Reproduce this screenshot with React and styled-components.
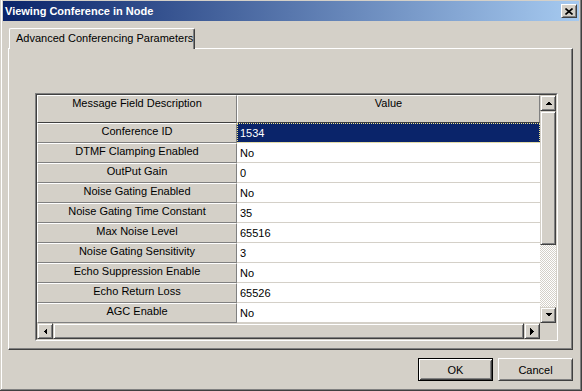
import React from 'react';
import styled, { createGlobalStyle } from 'styled-components';

const GlobalStyle = createGlobalStyle`
  html, body {
    margin: 0;
    padding: 0;
    background: #d4d0c8;
  }
  body {
    font-family: "Liberation Sans", Arial, sans-serif;
    font-size: 11px;
    color: #000;
  }
`;

// 3d bevels used all over the classic look
const raised = `
  border: 1px solid;
  border-color: #fff #404040 #404040 #fff;
  box-shadow: inset 1px 1px #d4d0c8, inset -1px -1px #808080;
`;

const scrollRaised = `
  border: 1px solid;
  border-color: #d4d0c8 #404040 #404040 #d4d0c8;
  box-shadow: inset 1px 1px #fff, inset -1px -1px #808080;
`;

const Window = styled.div`
  width: 582px;
  height: 391px;
  box-sizing: border-box;
  padding: 1px 3px 3px 3px;
  background: #d4d0c8;
  display: flex;
  flex-direction: column;
  box-shadow: inset -1px -1px #404040, inset 1px 0 #d4d0c8, inset -2px -2px #808080, inset 2px 0 #fff;
`;

const TitleBar = styled.div`
  height: 20px;
  flex: none;
  display: flex;
  align-items: center;
  justify-content: space-between;
  padding: 0 2px;
  background: linear-gradient(to right, #0a246a, #a6caf0);
  color: #fff;
  font-weight: bold;
  font-size: 11px;
`;

const CloseButton = styled.div`
  width: 16px;
  height: 14px;
  box-sizing: border-box;
  background: #d4d0c8;
  display: flex;
  align-items: center;
  justify-content: center;
  ${raised}
`;

const Body = styled.div`
  flex: 1;
  display: flex;
  flex-direction: column;
  padding: 7px 6px 0 5px;
`;

const TabStrip = styled.div`
  display: flex;
  padding-left: 1px;
`;

const Tab = styled.div`
  position: relative;
  z-index: 1;
  width: 186px;
  height: 21px;
  margin-bottom: -1px;
  box-sizing: border-box;
  padding: 3px 0 0 6px;
  background: #d4d0c8;
  border-top: 1px solid #fff;
  border-left: 1px solid #fff;
  border-right: 1px solid #404040;
  border-top-left-radius: 2px;
  border-top-right-radius: 2px;
  box-shadow: inset -1px 0 #808080;
  white-space: nowrap;
`;

const Panel = styled.div`
  height: 302px;
  box-sizing: border-box;
  padding: 44px 0 0 26px;
  border-top: 1px solid #fff;
  border-left: 1px solid #fff;
  border-right: 1px solid #404040;
  border-bottom: 1px solid #404040;
  box-shadow: inset -1px -1px #808080;
`;

const GridFrame = styled.div`
  width: 523px;
  height: 248px;
  box-sizing: border-box;
  border: 1px solid;
  border-color: #808080 #fff #fff #808080;
`;

const GridInner = styled.div`
  height: 100%;
  box-sizing: border-box;
  border: 1px solid;
  border-color: #404040 #d4d0c8 #d4d0c8 #404040;
  display: grid;
  grid-template-columns: 503px 16px;
  grid-template-rows: 228px 16px;
  background: #d4d0c8;
`;

const Table = styled.div`
  display: grid;
  grid-template-columns: 200px 303px;
  grid-template-rows: 28px;
  grid-auto-rows: 20px;
  background: #fff;
  overflow: hidden;
`;

const HeadCell = styled.div`
  background: #d4d0c8;
  box-sizing: border-box;
  border-top: 1px solid #fff;
  border-left: 1px solid #fff;
  border-right: 1px solid #808080;
  border-bottom: 1px solid #404040;
  text-align: center;
  padding-top: 1px;
  line-height: 13px;
`;

const LabelCell = styled.div`
  background: #d4d0c8;
  box-sizing: border-box;
  border-top: 1px solid #fff;
  border-left: 1px solid #fff;
  border-right: 1px solid #808080;
  border-bottom: 1px solid #808080;
  text-align: center;
  line-height: 14px;
  padding-top: 0px;
  white-space: nowrap;
`;

const ValueCell = styled.div`
  box-sizing: border-box;
  border-bottom: 1px solid #d4d0c8;
  padding: 3px 0 0 3px;
  line-height: 14px;
  background: ${p => (p.$selected ? '#0a246a' : '#fff')};
  color: ${p => (p.$selected ? '#fff' : '#000')};
  outline: ${p => (p.$selected ? '1px dotted #f0e68c' : 'none')};
  outline-offset: -1px;
`;

const VScroll = styled.div`
  display: flex;
  flex-direction: column;
`;

const HScroll = styled.div`
  display: flex;
`;

const ArrowButton = styled.div`
  width: 16px;
  height: 16px;
  flex: none;
  box-sizing: border-box;
  background: #d4d0c8;
  display: flex;
  align-items: center;
  justify-content: center;
  ${scrollRaised}
`;

const Thumb = styled.div`
  flex: ${p => (p.$size ? 'none' : '1')};
  height: ${p => (p.$size ? `${p.$size}px` : 'auto')};
  box-sizing: border-box;
  background: #d4d0c8;
  ${scrollRaised}
`;

const Track = styled.div`
  flex: 1;
  background-color: #fff;
  background-image: conic-gradient(#d4d0c8 25%, #fff 0 50%, #d4d0c8 0 75%, #fff 0);
  background-size: 2px 2px;
`;

const Corner = styled.div`
  background: #d4d0c8;
`;

const ButtonRow = styled.div`
  display: flex;
  justify-content: flex-end;
  gap: 5px;
  margin-top: 8px;
`;

const Button = styled.div`
  width: 75px;
  height: 23px;
  box-sizing: border-box;
  display: flex;
  align-items: center;
  justify-content: center;
  background: #d4d0c8;
  ${p =>
    p.$default
      ? `
    border: 1px solid #000;
    box-shadow: inset 1px 1px #fff, inset -1px -1px #404040, inset 2px 2px #d4d0c8, inset -2px -2px #808080;
  `
      : raised}
`;

const Arrow = ({ dir }) => {
  const pts = {
    up: '0,4 7,4 3.5,0.5',
    down: '0,0 7,0 3.5,3.5',
    left: '4,0 4,7 0.5,3.5',
    right: '0,0 0,7 3.5,3.5',
  }[dir];
  const vertical = dir === 'up' || dir === 'down';
  return (
    <svg width={vertical ? 7 : 4} height={vertical ? 4 : 7} viewBox={vertical ? '0 0 7 4' : '0 0 4 7'}>
      <polygon points={pts} fill="#000" shapeRendering="crispEdges" />
    </svg>
  );
};

const CloseGlyph = () => (
  <svg width="8" height="7" viewBox="0 0 8 7">
    <path d="M0.5 0.5 L7.5 6.5 M7.5 0.5 L0.5 6.5" stroke="#000" strokeWidth="1.6" fill="none" />
  </svg>
);

const rows = [
  ['Conference ID', '1534'],
  ['DTMF Clamping Enabled', 'No'],
  ['OutPut Gain', '0'],
  ['Noise Gating Enabled', 'No'],
  ['Noise Gating Time Constant', '35'],
  ['Max Noise Level', '65516'],
  ['Noise Gating Sensitivity', '3'],
  ['Echo Suppression Enable', 'No'],
  ['Echo Return Loss', '65526'],
  ['AGC Enable', 'No'],
];

export default function App() {
  return (
    <>
      <GlobalStyle />
      <Window>
        <TitleBar>
          <span>Viewing Conference in Node</span>
          <CloseButton><CloseGlyph /></CloseButton>
        </TitleBar>
        <Body>
          <TabStrip>
            <Tab>Advanced Conferencing Parameters</Tab>
          </TabStrip>
          <Panel>
            <GridFrame>
              <GridInner>
                <Table>
                  <HeadCell>Message Field Description</HeadCell>
                  <HeadCell>Value</HeadCell>
                  {rows.map(([label, value], i) => (
                    <React.Fragment key={label}>
                      <LabelCell>{label}</LabelCell>
                      <ValueCell $selected={i === 0}>{value}</ValueCell>
                    </React.Fragment>
                  ))}
                </Table>
                <VScroll>
                  <ArrowButton><Arrow dir="up" /></ArrowButton>
                  <Thumb $size={134} />
                  <Track />
                  <ArrowButton><Arrow dir="down" /></ArrowButton>
                </VScroll>
                <HScroll>
                  <ArrowButton><Arrow dir="left" /></ArrowButton>
                  <Thumb />
                  <ArrowButton><Arrow dir="right" /></ArrowButton>
                </HScroll>
                <Corner />
              </GridInner>
            </GridFrame>
          </Panel>
          <ButtonRow>
            <Button $default>OK</Button>
            <Button>Cancel</Button>
          </ButtonRow>
        </Body>
      </Window>
    </>
  );
}
